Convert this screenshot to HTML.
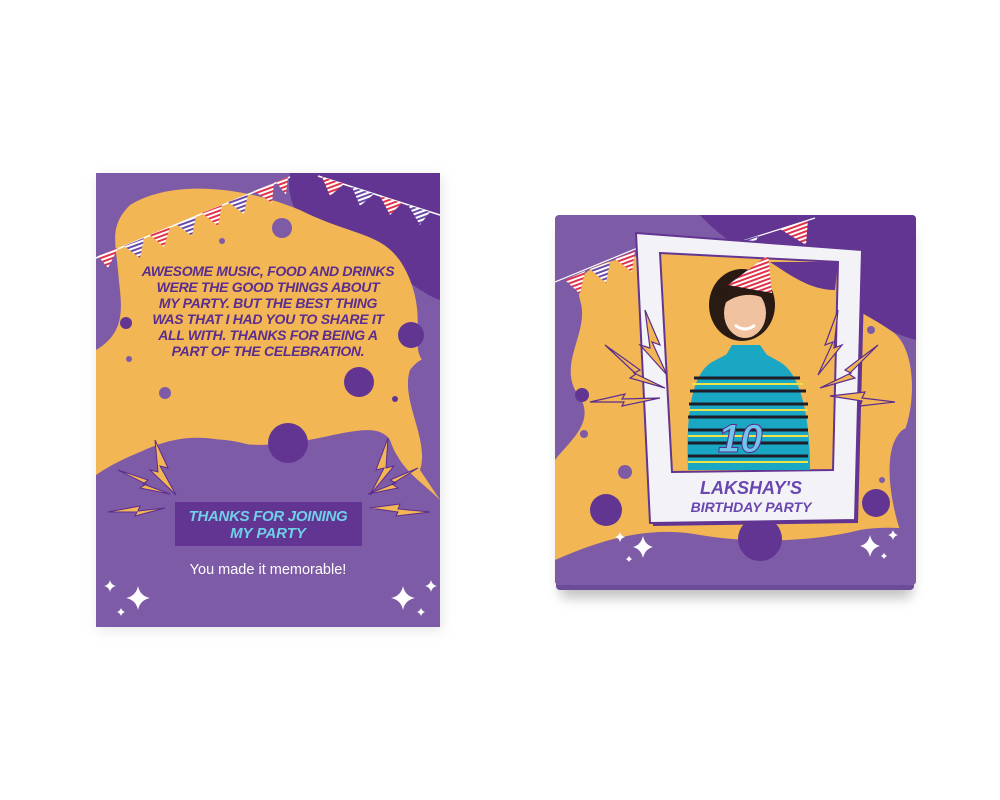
<!DOCTYPE html>
<html><head><meta charset="utf-8"><style>
html,body{margin:0;padding:0;background:#fff;width:1000px;height:800px;overflow:hidden}
svg{display:block}
.c{font-family:"Liberation Sans",sans-serif;font-weight:bold;font-style:italic}
</style></head><body>
<svg width="1000" height="800" viewBox="0 0 1000 800" xmlns="http://www.w3.org/2000/svg">
<defs>
<pattern id="sr" width="4" height="4" patternUnits="userSpaceOnUse" patternTransform="rotate(70)"><rect width="4" height="4" fill="#fff"/><rect width="2" height="4" fill="#e0324a"/></pattern>
<pattern id="sp" width="4" height="4" patternUnits="userSpaceOnUse" patternTransform="rotate(70)"><rect width="4" height="4" fill="#fff"/><rect width="2" height="4" fill="#6a4aa8"/></pattern>
<clipPath id="cl"><rect x="96" y="173" width="344" height="454"/></clipPath>
<clipPath id="cr"><rect x="555" y="215" width="361" height="370" rx="4"/></clipPath>
<filter id="sh" x="-20%" y="-20%" width="140%" height="150%"><feGaussianBlur stdDeviation="6"/></filter>
</defs>

<!-- LEFT CARD -->
<rect x="98" y="176" width="344" height="454" fill="#ccc" filter="url(#sh)" opacity=".5"/>
<g clip-path="url(#cl)">
<rect x="96" y="173" width="344" height="454" fill="#7d5ba6"/>
<path d="M290 173 L440 173 L440 300 C410 290 380 250 330 240 C300 230 285 200 290 173Z" fill="#633592"/>
<path d="M130 205 C170 180 240 185 300 210 C360 240 390 230 410 280 C430 330 400 360 440 370 L440 500 C420 480 400 470 390 440 C370 410 300 460 220 440 C170 430 130 455 96 480 L96 350 C130 330 120 300 118 270 C115 240 110 225 130 205Z" fill="#f2b654"/>
<path d="M96 475 C140 445 200 430 250 445 C300 460 350 480 380 455 C400 440 400 470 410 480 L440 500 L440 627 L96 627Z" fill="#7d5ba6"/>
<path d="M410 370 C425 350 440 360 440 360 L440 500 L420 470 C430 440 400 400 410 370Z" fill="#7d5ba6"/>
<circle cx="282" cy="228" r="10" fill="#7d5ba6"/><circle cx="222" cy="241" r="3" fill="#7d5ba6"/>
<circle cx="126" cy="323" r="6" fill="#633592"/><circle cx="411" cy="335" r="13" fill="#633592"/>
<circle cx="129" cy="359" r="3" fill="#7d5ba6"/><circle cx="359" cy="382" r="15" fill="#633592"/>
<circle cx="165" cy="393" r="6" fill="#7d5ba6"/><circle cx="395" cy="399" r="3" fill="#633592"/>
<circle cx="288" cy="443" r="20" fill="#633592"/>
<path d="M96 258 L290 177" stroke="#fff" stroke-width="1.5"/>
<polygon points="98,256 118,248 108,268" fill="url(#sr)"/>
<polygon points="124,246 144,238 140,258" fill="url(#sp)"/>
<polygon points="150,235 170,227 164,247" fill="url(#sr)"/>
<polygon points="176,224 196,216 192,236" fill="url(#sp)"/>
<polygon points="202,213 222,205 218,226" fill="url(#sr)"/>
<polygon points="228,202 248,194 244,214" fill="url(#sp)"/>
<polygon points="254,191 274,183 272,203" fill="url(#sr)"/>
<polygon points="276,182 288,177 286,195" fill="url(#sr)"/>
<path d="M318 176 L440 215" stroke="#fff" stroke-width="1.5"/>
<polygon points="322,177 344,184 330,196" fill="url(#sr)"/>
<polygon points="352,187 374,194 360,206" fill="url(#sp)"/>
<polygon points="380,196 402,203 390,215" fill="url(#sr)"/>
<polygon points="408,205 430,212 420,225" fill="url(#sp)"/>
<g class="c" fill="#5b2d8f" font-size="14" text-anchor="middle" letter-spacing="-0.3">
<text x="268" y="276">AWESOME MUSIC, FOOD AND DRINKS</text>
<text x="268" y="292">WERE THE GOOD THINGS ABOUT</text>
<text x="268" y="308">MY PARTY. BUT THE BEST THING</text>
<text x="268" y="324">WAS THAT I HAD YOU TO SHARE IT</text>
<text x="268" y="340">ALL WITH. THANKS FOR BEING A</text>
<text x="268" y="356">PART OF THE CELEBRATION.</text>
</g>
<g fill="#f2b654" stroke="#5b2d8f" stroke-width="1">
<polygon points="155,440 168,468 160,466 176,495 150,470 158,472"/>
<polygon points="118,470 148,480 143,484 170,494 140,488 146,484"/>
<polygon points="108,512 140,506 138,511 165,508 135,516 137,512"/>
<polygon points="388,438 376,470 384,468 370,495 394,466 386,468"/>
<polygon points="418,468 390,480 396,483 368,494 398,488 392,484"/>
<polygon points="370,508 400,504 398,509 430,512 396,516 398,512"/>
</g>
<rect x="175" y="502" width="187" height="44" fill="#633592"/>
<text class="c" fill="#6fd0e8" font-size="15" text-anchor="middle" x="268" y="521" letter-spacing="-0.3">THANKS FOR JOINING</text>
<text class="c" fill="#6fd0e8" font-size="15" text-anchor="middle" x="268" y="538">MY PARTY</text>
<text fill="#fff" font-family="Liberation Sans,sans-serif" font-size="14.5" text-anchor="middle" x="268" y="574">You made it memorable!</text>
<g fill="#fff">
<path d="M138 586 Q140 596 150 598 Q140 600 138 610 Q136 600 126 598 Q136 596 138 586Z"/>
<path d="M110 580 Q111 585 116 586 Q111 587 110 592 Q109 587 104 586 Q109 585 110 580Z"/>
<path d="M121 608 Q122 611 125 612 Q122 613 121 616 Q120 613 117 612 Q120 611 121 608Z"/>
<path d="M403 586 Q405 596 415 598 Q405 600 403 610 Q401 600 391 598 Q401 596 403 586Z"/>
<path d="M431 580 Q432 585 437 586 Q432 587 431 592 Q430 587 425 586 Q430 585 431 580Z"/>
<path d="M421 608 Q422 611 425 612 Q422 613 421 616 Q420 613 417 612 Q420 611 421 608Z"/>
</g>
</g>

<!-- RIGHT BOX -->
<rect x="560" y="230" width="352" height="368" rx="6" fill="#999" filter="url(#sh)" opacity=".6"/>
<rect x="556" y="572" width="358" height="18" rx="4" fill="#6c4c98"/>
<g clip-path="url(#cr)">
<rect x="555" y="215" width="361" height="370" fill="#7d5ba6"/>
<path d="M700 215 L916 215 L916 340 C880 330 850 310 830 290 C800 270 740 260 700 215Z" fill="#633592"/>
<path d="M600 265 C640 250 700 250 760 270 C820 290 860 310 890 330 C916 345 916 400 905 430 C895 460 916 470 916 480 L916 585 L555 585 L555 460 C570 440 600 420 575 390 C560 360 590 330 580 300 C575 280 585 270 600 265Z" fill="#f2b654"/>
<path d="M555 560 C600 540 650 525 700 535 C760 545 820 540 860 530 C890 525 916 530 916 530 L916 585 L555 585Z" fill="#7d5ba6"/>
<path d="M895 440 C905 420 916 430 916 430 L916 540 L900 530 C890 500 885 460 895 440Z" fill="#7d5ba6"/>
<circle cx="582" cy="395" r="7" fill="#633592"/><circle cx="584" cy="434" r="4" fill="#7d5ba6"/>
<circle cx="625" cy="472" r="7" fill="#7d5ba6"/><circle cx="606" cy="510" r="16" fill="#633592"/>
<circle cx="760" cy="539" r="22" fill="#633592"/><circle cx="876" cy="503" r="14" fill="#633592"/>
<circle cx="882" cy="480" r="3" fill="#7d5ba6"/><circle cx="871" cy="330" r="4" fill="#7d5ba6"/>
<path d="M555 282 L640 247" stroke="#fff" stroke-width="1.2"/>
<polygon points="565,280 585,271 580,294" fill="url(#sr)"/>
<polygon points="590,269 610,262 606,283" fill="url(#sp)"/>
<polygon points="615,259 635,251 632,272" fill="url(#sr)"/>
<path d="M730 245 L815 218" stroke="#fff" stroke-width="1.2"/>
<polygon points="738,242 758,236 752,253" fill="url(#sp)"/>
<polygon points="780,229 808,220 806,245" fill="url(#sr)"/>
<polygon points="636,233 862,250 855,520 650,523" fill="#633592" transform="translate(3,3)"/>
<polygon points="636,233 862,250 855,520 650,523" fill="#f3f3f7"/>
<polygon points="636,233 862,250 855,520 650,523" fill="none" stroke="#633592" stroke-width="2"/>
<polygon points="660,253 838,262 833,470 672,472" fill="#f2b654" stroke="#633592" stroke-width="2"/>
<path d="M770 262 C790 275 810 290 835 290 L838 262Z" fill="#633592"/>
<g fill="#f2b654" stroke="#5b2d8f" stroke-width="1.2">
<polygon points="645,310 660,345 652,342 667,375 640,345 650,348"/>
<polygon points="605,345 640,370 634,373 665,388 630,378 636,374"/>
<polygon points="590,402 625,394 622,399 660,398 622,406 624,402"/>
<polygon points="838,310 825,345 833,342 818,375 842,345 834,348"/>
<polygon points="878,345 845,370 851,373 820,388 855,378 849,374"/>
<polygon points="830,396 865,392 862,398 895,402 860,406 862,401"/>
</g>
<path d="M688 470 C686 420 690 375 712 362 L735 350 L758 350 L780 362 C802 375 810 420 810 470Z" fill="#1aa7c3"/>
<g stroke="#1e1e2a" stroke-width="3"><path d="M694 378 L800 378 M690 391 L806 391 M689 404 L808 404 M688 417 L808 417 M688 430 L808 430 M688 443 L808 443 M688 456 L808 456"/></g>
<g stroke="#f0e24a" stroke-width="2"><path d="M692 384 L803 384 M689 410 L808 410 M688 436 L808 436 M688 462 L808 462"/></g>
<path d="M732 345 L760 345 L772 362 L746 372 L722 362Z" fill="#1aa7c3"/>
<ellipse cx="742" cy="305" rx="33" ry="36" fill="#2a1a14"/>
<ellipse cx="745" cy="313" rx="21" ry="25" fill="#f0c2a0"/>
<path d="M722 298 C730 282 760 280 768 292 L768 302 C760 292 735 292 722 306Z" fill="#2a1a14"/>
<path d="M735 325 Q745 333 755 325" stroke="#fff" stroke-width="3" fill="none"/>
<polygon points="768,255 728,285 772,293" fill="url(#sr)"/>
<text x="718" y="452" font-family="Liberation Sans,sans-serif" font-weight="bold" font-style="italic" font-size="40" fill="#6fc6ea" stroke="#5b2d8f" stroke-width="1">10</text>
<text class="c" fill="#6a47b0" font-size="18" text-anchor="middle" x="751" y="494">LAKSHAY'S</text>
<text class="c" fill="#6a47b0" font-size="14" text-anchor="middle" x="751" y="512">BIRTHDAY PARTY</text>
<g fill="#fff">
<path d="M643 536 Q645 545 653 547 Q645 549 643 558 Q641 549 633 547 Q641 545 643 536Z"/>
<path d="M620 532 Q621 536 625 537 Q621 538 620 542 Q619 538 615 537 Q619 536 620 532Z"/>
<path d="M629 556 Q630 558 632 559 Q630 560 629 562 Q628 560 626 559 Q628 558 629 556Z"/>
<path d="M870 535 Q872 544 880 546 Q872 548 870 557 Q868 548 860 546 Q868 544 870 535Z"/>
<path d="M893 530 Q894 534 898 535 Q894 536 893 540 Q892 536 888 535 Q892 534 893 530Z"/>
<path d="M884 553 Q885 555 887 556 Q885 557 884 559 Q883 557 881 556 Q883 555 884 553Z"/>
</g>
</g>
</svg>
</body></html>
